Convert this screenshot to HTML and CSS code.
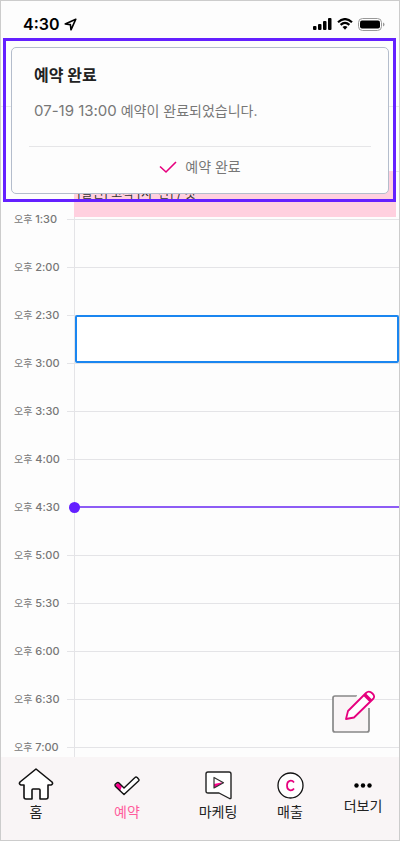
FILE: index.html
```html
<!DOCTYPE html>
<html lang="ko">
<head>
    <meta charset="UTF-8">
    <meta name="viewport" content="width=device-width, initial-scale=1.0">
    <title>예약 캘린더</title>
    <link rel="stylesheet" href="styles.css">
</head>
<body>
    <div class="app">
        <header class="header">
            <div class="status-bar">
                <div class="status-time">
                    <span>4:30</span>
                    <svg width="13" height="13" viewBox="0 0 13 13">
                        <path d="M11.8 1.2 1.2 6 6.4 6.6 7 11.8Z" fill="none" stroke="#000" stroke-width="1.6" stroke-linejoin="round"/>
                    </svg>
                </div>
                <div class="status-icons">
                    <svg width="19" height="12" viewBox="0 0 19 12">
                        <rect x="0" y="8" width="3.5" height="4" rx="1"/>
                        <rect x="5" y="6" width="3.5" height="6" rx="1"/>
                        <rect x="10" y="3" width="3.5" height="9" rx="1"/>
                        <rect x="15" y="0" width="3.5" height="12" rx="1"/>
                    </svg>
                    <svg width="16" height="12" viewBox="0 0 16 12">
                        <path d="M1 4.2Q8-2 15 4.2M3.6 6.9Q8 3 12.4 6.9" fill="none" stroke="#000" stroke-width="2.2"/>
                        <path d="M5.5 9Q8 7 10.5 9L8 11.8Z"/>
                    </svg>
                    <svg width="27" height="13" viewBox="0 0 27 13">
                        <rect x=".5" y=".5" width="23" height="12" rx="4" fill="none" stroke="#999"/>
                        <rect x="2" y="2.500" width="20" height="8" rx="2"/>
                        <path d="M25 4.5Q26.5 5 26.5 6.5T25 8.5Z" fill="#999"/>
                    </svg>
                </div>
            </div>
        </header>

        <!-- 예약 완료 알림 -->
        <div class="notice-highlight">
            <section class="notice">
                <h1 class="notice-title">예약 완료</h1>
                <p class="notice-text"><time>07-19 13:00</time> 예약이 완료되었습니다.</p>
                <button type="button" class="notice-button">
                    <svg width="18" height="14" viewBox="0 0 18 14">
                        <path d="M1 6.5 7 12 17 2" fill="none" stroke="#e6007e" stroke-width="1.6"/>
                    </svg>
                    예약 완료
                </button>
            </section>
        </div>

        <main class="calendar">
            <div class="slot">
                <span class="slot-time">오후 <b>1:00</b></span>
                <div class="event">[블런] 고객 [지*진] / 컷</div>
            </div>
            <div class="slot"><span class="slot-time">오후 <b>1:30</b></span></div>
            <div class="slot"><span class="slot-time">오후 <b>2:00</b></span></div>
            <div class="slot">
                <span class="slot-time">오후 <b>2:30</b></span>
                <div class="selected"></div>
            </div>
            <div class="slot"><span class="slot-time">오후 <b>3:00</b></span></div>
            <div class="slot"><span class="slot-time">오후 <b>3:30</b></span></div>
            <div class="slot"><span class="slot-time">오후 <b>4:00</b></span></div>
            <div class="slot now"><span class="slot-time">오후 <b>4:30</b></span></div>
            <div class="slot"><span class="slot-time">오후 <b>5:00</b></span></div>
            <div class="slot"><span class="slot-time">오후 <b>5:30</b></span></div>
            <div class="slot"><span class="slot-time">오후 <b>6:00</b></span></div>
            <div class="slot"><span class="slot-time">오후 <b>6:30</b></span></div>
            <div class="slot"><span class="slot-time">오후 <b>7:00</b></span></div>

            <button type="button" class="write-button" aria-label="예약 등록">
                <svg width="44" height="44" viewBox="0 0 44 44">
                    <path d="M25 6H3Q1 6 1 8V40Q1 42 3 42H35Q37 42 37 40V18L29 6Z" fill="#f9f5f6"/>
                    <path d="M25 6H3Q1 6 1 8V40Q1 42 3 42H35Q37 42 37 40V18" fill="none" stroke="#888" stroke-width="1.7"/>
                    <path d="M26 5 37 17" stroke="#fdfdfd" stroke-width="5"/>
                    <path d="M14 29 16 21 34 3Q37 0 40.500 3.500 43.500 6.500 41 9L22 27.500Z" fill="#fff" stroke="#e6007e" stroke-width="1.8" stroke-linejoin="round"/>
                    <path d="M32.500 4.500 39 11" stroke="#e6007e" stroke-width="3.5"/>
                </svg>
            </button>
        </main>

        <nav class="tab-bar">
            <a href="#" class="tab">
                <svg width="36" height="32" viewBox="0 0 36 32">
                    <path d="M18 1 34 14Q35.500 16 33 17H30V29Q30 31 28 31H22V22Q22 21 21 21H15Q14 21 14 22V31H8Q6 31 6 29V17H3Q.5 16 2 14Z" fill="#fff" stroke="#111" stroke-width="1.6" stroke-linejoin="round"/>
                </svg>
                <span>홈</span>
            </a>
            <a href="#" class="tab active">
                <svg width="26" height="32" viewBox="0 0 26 32">
                    <path d="M1 18 4 14.500 10 20 21.500 9Q24.500 9 25 12L10 26.500Z" fill="#fff"/>
                    <path d="M1 17.500 4 14.500 8 18 6 23.500Z" fill="#ff008c"/>
                    <path d="M1.500 18.500Q.5 17 1.500 16L3 14.800Q4 14 5 15L10 20 21 9.500Q22 8.500 23.200 9.500L24.500 11Q25.500 12 24.500 13L10 26.500Z" fill="none" stroke="#111" stroke-width="1.4" stroke-linejoin="round"/>
                </svg>
                <span>예약</span>
            </a>
            <a href="#" class="tab">
                <svg width="27" height="32" viewBox="0 0 27 32">
                    <path d="M3 4H24Q26 4 26 6V30Q26 31 24.500 30.500L14 25H3Q1 25 1 23V6Q1 4 3 4Z" fill="#fff" stroke="#222" stroke-width="1.4" stroke-linejoin="round"/>
                    <path d="M9 16 19 14 9 20Z" fill="#ff008c"/>
                    <path d="M9 9.500V20L18.500 14.700Z" fill="none" stroke="#333" stroke-width="1.2" stroke-linejoin="round"/>
                </svg>
                <span>마케팅</span>
            </a>
            <a href="#" class="tab">
                <svg width="27" height="32" viewBox="0 0 27 32">
                    <circle cx="13.500" cy="17.500" r="12.500" fill="#fff" stroke="#111" stroke-width="1.300"/>
                    <path d="M17 14.500C15 11.500 10 12 10 17.500S15 23.500 17 20.500" fill="none" stroke="#e6007e" stroke-width="1.700"/>
                </svg>
                <span>매출</span>
            </a>
            <a href="#" class="tab">
                <svg width="18" height="26" viewBox="0 0 18 26">
                    <circle cx="2.500" cy="17.500" r="2.200"/>
                    <circle cx="9" cy="17.500" r="2.200"/>
                    <circle cx="15.500" cy="17.500" r="2.200"/>
                </svg>
                <span>더보기</span>
            </a>
        </nav>
    </div>
</body>
</html>
```
FILE: styles.css
```css
* {
    box-sizing: border-box;
}
body {
    margin: 0;
    font-family: Inter, "Noto Sans CJK KR", sans-serif;
    background-color: #fff;
    color: #222;
}
button {
    font-family: inherit;
    cursor: pointer;
}
svg {
    display: block;
    flex: none;
}
.app {
    position: relative;
    display: flex;
    flex-direction: column;
    height: 100vh;
    border: 1px solid #ccc;
    background-color: #fdfdfd;
    overflow: hidden;
}

/* 상단 */
.header {
    flex: none;
    height: 106px;
    border-bottom: 1px solid #e8e8ea;
}
.status-bar {
    display: flex;
    justify-content: space-between;
    align-items: center;
    padding: 11px 14px 0 22px;
    color: #000;
}
.status-time {
    display: flex;
    align-items: center;
    gap: 4px;
    font-size: 16px;
    line-height: 24px;
    font-weight: 600;
}
.status-icons {
    display: flex;
    align-items: center;
    gap: 5px;
}

/* 알림 */
.notice-highlight {
    position: absolute;
    z-index: 2;
    top: 37px;
    left: 2px;
    right: 3px;
    padding: 6px 4px 5px 5px;
    border: 3px solid #6420ff;
}
.notice {
    padding: 15px 17px 14px;
    border: 1px solid #b4bdcc;
    border-radius: 5px;
    background-color: #fdfdfd;
}
.notice-title {
    margin: 0 5px 12px;
    font-size: 16px;
    line-height: 24px;
    font-weight: 700;
}
.notice-text {
    margin: 0 5px 23px;
    font-size: 14px;
    line-height: 24px;
    color: #777;
}
.notice-text time {
    font-size: 15px;
}
.notice-button {
    display: flex;
    justify-content: center;
    align-items: center;
    gap: 8px;
    width: 100%;
    padding: 8px 0 0;
    border: 0;
    border-top: 1px solid #e6e6e8;
    background: none;
    font-size: 14px;
    line-height: 24px;
    color: #777;
}

/* 시간표 */
.calendar {
    position: relative;
    flex: 1;
    min-height: 0;
    padding-top: 40px;
    overflow: hidden;
}
.calendar::before {
    content: "";
    position: absolute;
    top: 0;
    bottom: 0;
    left: 73px;
    width: 1px;
    background-color: #e4e4e7;
}
.slot {
    position: relative;
    display: flex;
    align-items: center;
    height: 48px;
}
.slot::after {
    content: "";
    flex: 1;
    height: 1px;
    background-color: #e4e4e7;
}
.slot-time {
    width: 66px;
    padding: 0 0 2px 13px;
    font-size: 10px;
    color: #777;
}
.slot-time b {
    font-size: 11px;
    font-weight: 500;
}
.event {
    position: absolute;
    z-index: 1;
    top: 24px;
    left: 73px;
    right: 3px;
    height: 46px;
    padding: 11px 3px;
    background-color: #ffd0df;
    font-size: 12px;
    line-height: 24px;
    color: #333;
}
.selected {
    position: absolute;
    z-index: 1;
    top: 24px;
    left: 74px;
    right: 0;
    height: 48px;
    border: 2px solid #1a86f0;
    border-radius: 2px;
    background-color: #fff;
}
.now::before {
    content: "";
    position: absolute;
    top: 19px;
    left: 68px;
    width: 11px;
    height: 11px;
    border-radius: 50%;
    background-color: #6420ff;
}
.now::after {
    margin-left: 8px;
    height: 2px;
    background-color: #8d5cf5;
}
.write-button {
    position: absolute;
    right: 23px;
    bottom: 23px;
    padding: 0;
    border: 0;
    background: none;
}

/* 하단 메뉴 */
.tab-bar {
    display: grid;
    grid-template-columns: 70fr 112fr 70fr 74fr 72fr;
    flex: none;
    padding: 11px 0 16px;
    background-color: #f9f5f6;
}
.tab {
    display: flex;
    flex-direction: column;
    align-items: center;
    font-size: 14px;
    line-height: 24px;
    color: #222;
    text-decoration: none;
}
.active {
    color: #ff5c9c;
}
```
